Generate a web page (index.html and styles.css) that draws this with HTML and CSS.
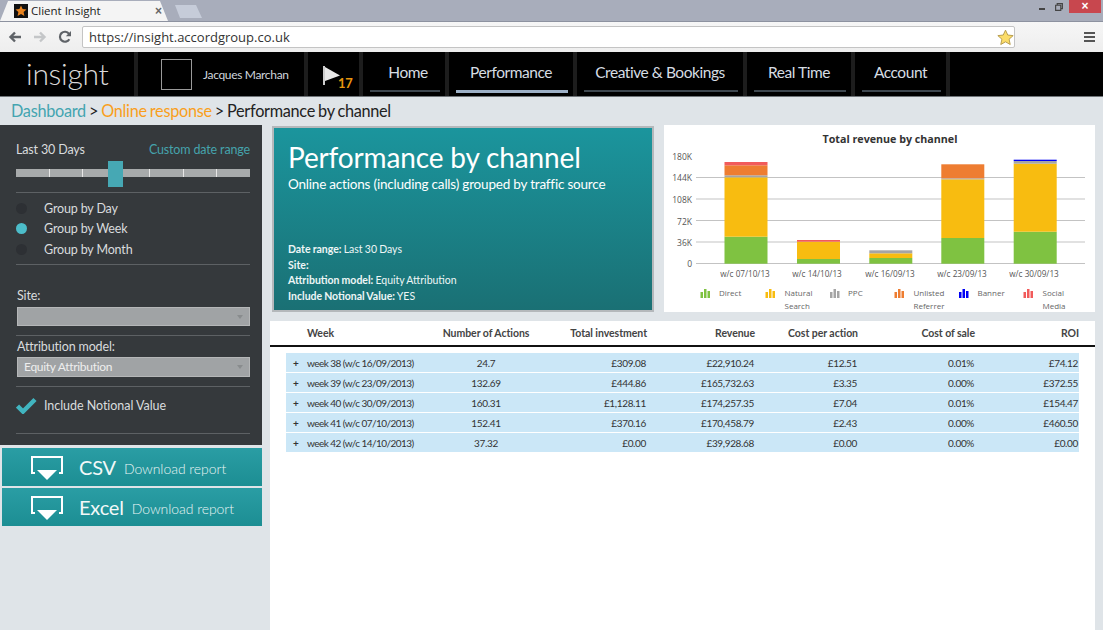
FILE: index.html
```html
<!DOCTYPE html>
<html lang="en">
<head>
<meta charset="utf-8">
<title>Client Insight</title>
<link rel="stylesheet" href="styles.css">
</head>
<body>
<div class="tabbar">
  <div class="tab">
    <svg class="favicon" viewBox="0 0 14 14"><rect width="14" height="14" fill="#111"/><path d="M7 1.5l1.6 3.6 3.9.4-2.9 2.6.8 3.9L7 10l-3.4 2 .8-3.9-2.9-2.6 3.9-.4z" fill="#e8831f"/></svg>
    <span class="tab-title">Client Insight</span>
    <span class="tab-close">×</span>
  </div>
  <div class="newtab"></div>
  <div class="winctrl">
    <span class="win-min"></span>
    <svg class="win-restore" viewBox="0 0 9 9"><path d="M2.5 2.5V.7h5.8v5.6H6.5M.7 2.5h5.8v5.8H.7z" fill="none" stroke="#444" stroke-width="1.3"/></svg>
    <span class="win-close">×</span>
  </div>
</div>
<div class="toolbar">
  <svg class="tool-icon" viewBox="0 0 14 14"><path d="M13 7H3M7 2.5L2.5 7 7 11.500" fill="none" stroke="#5f6368" stroke-width="2.400"/></svg>
  <svg class="tool-icon" viewBox="0 0 14 14"><path d="M1 7h10M7 2.500L11.500 7 7 11.500" fill="none" stroke="#c4c6c8" stroke-width="2.400"/></svg>
  <svg class="tool-icon" viewBox="0 0 14 14"><path d="M11.300 9.200A5 5 0 1 1 11 3.800" fill="none" stroke="#5f6368" stroke-width="2.200"/><path d="M13 1v5.200H7.800z" fill="#5f6368"/></svg>
  <div class="urlbar">
    <span class="url">https://insight.accordgroup.co.uk</span>
    <svg class="star" viewBox="0 0 18 18"><path d="M9 1.200l2.400 5.200 5.700.6-4.300 3.800 1.200 5.600L9 13.600l-5 2.800 1.200-5.600L.9 7l5.700-.6z" fill="#fbdc68" stroke="#b59a4a"/></svg>
  </div>
  <div class="menu-btn"><span></span><span></span><span></span></div>
</div>
<header class="topnav">
  <div class="logo">insight</div>
  <div class="user">
    <div class="avatar"></div>
    <span class="user-name">Jacques Marchan</span>
  </div>
  <div class="flag">
    <svg class="flag-icon" viewBox="0 0 18 19"><path d="M1 0v19" stroke="#ccc" stroke-width="2"/><path d="M2 1l15 8.500L2 15z" fill="#e8e8e8"/></svg>
    <span class="flag-count">17</span>
  </div>
  <nav class="nav">
    <a class="nav-item w-home">Home</a>
    <a class="nav-item w-perf active">Performance</a>
    <a class="nav-item w-creative">Creative &amp; Bookings</a>
    <a class="nav-item w-real">Real Time</a>
    <a class="nav-item w-account">Account</a>
  </nav>
</header>
<div class="crumbs"><span class="c-teal">Dashboard</span> &gt; <span class="c-orange">Online response</span> &gt; Performance by channel</div>
<div class="content">
  <div class="side">
    <aside class="filters">
      <div class="range-row"><span>Last 30 Days</span><span class="custom">Custom date range</span></div>
      <div class="slider">
        <div class="track"><i></i><i></i><i></i><i></i><i></i><i></i><i></i></div>
        <div class="handle"></div>
      </div>
      <div class="rule r-a"></div>
      <div class="radio"><span class="dot"></span>Group by Day</div>
      <div class="radio"><span class="dot on"></span>Group by Week</div>
      <div class="radio"><span class="dot"></span>Group by Month</div>
      <div class="rule r-b"></div>
      <div class="label">Site:</div>
      <div class="select s-site"><span class="arrow"></span></div>
      <div class="rule r-c"></div>
      <div class="label">Attribution model:</div>
      <div class="select s-attr">Equity Attribution<span class="arrow"></span></div>
      <div class="rule r-c"></div>
      <div class="check">
        <svg class="tick" viewBox="0 0 21 17"><path d="M1.500 9l5.500 5.500L19 2.500" fill="none" stroke="#41b5c0" stroke-width="4.500"/></svg>
        <span>Include Notional Value</span>
      </div>
      <div class="rule r-d"></div>
    </aside>
    <a class="dl">
      <svg class="dl-icon" viewBox="0 0 32 24"><path d="M4 17H1V1h30v16h-3" fill="none" stroke="#fff" stroke-width="2"/><path d="M6 14h20l-10 10z" fill="#fff"/></svg>
      <span class="dl-big">CSV</span><span class="dl-small">Download report</span>
    </a>
    <a class="dl">
      <svg class="dl-icon" viewBox="0 0 32 24"><path d="M4 17H1V1h30v16h-3" fill="none" stroke="#fff" stroke-width="2"/><path d="M6 14h20l-10 10z" fill="#fff"/></svg>
      <span class="dl-big">Excel</span><span class="dl-small">Download report</span>
    </a>
  </div>
  <main class="main">
    <div class="top-row">
      <section class="hero">
        <h1>Performance by channel</h1>
        <p class="hero-sub">Online actions (including calls) grouped by traffic source</p>
        <div class="meta">
          <div><b>Date range:</b> Last 30 Days</div>
          <div><b>Site:</b></div>
          <div><b>Attribution model:</b> Equity Attribution</div>
          <div><b>Include Notional Value:</b> YES</div>
        </div>
      </section>
      <section class="chart">
        <svg class="chart-svg" viewBox="664 125 431 187">
          <text class="ch-title" x="890" y="143" text-anchor="middle">Total revenue by channel</text>
          <g class="grid">
            <path d="M696 177.500H1085M696 199H1085M696 220.500H1085M696 242H1085M696 263.500H1085"/>
          </g>
          <g class="ylab" text-anchor="end">
            <text x="692" y="160">180K</text><text x="692" y="181">144K</text><text x="692" y="203">108K</text><text x="692" y="225">72K</text><text x="692" y="246">36K</text><text x="692" y="267">0</text>
          </g>
          <rect class="f-g" x="724.500" y="236.700" width="43" height="27"/>
          <rect class="f-y" x="724.500" y="177.300" width="43" height="59.400"/>
          <rect class="f-p" x="724.500" y="175.300" width="43" height="2"/>
          <rect class="f-o" x="724.500" y="165.300" width="43" height="10"/>
          <rect class="f-r" x="724.500" y="162" width="43" height="3.300"/>
          <rect class="f-g" x="797" y="259" width="43" height="4.700"/>
          <rect class="f-y" x="797" y="241.700" width="43" height="17.300"/>
          <rect class="f-r" x="797" y="240" width="43" height="1.700"/>
          <rect class="f-g" x="869.300" y="258" width="43" height="5.700"/>
          <rect class="f-y" x="869.300" y="253.300" width="43" height="4.700"/>
          <rect class="f-p" x="869.300" y="250.300" width="43" height="3"/>
          <rect class="f-g" x="941.300" y="238" width="43" height="25.700"/>
          <rect class="f-y" x="941.300" y="179.300" width="43" height="58.700"/>
          <rect class="f-p" x="941.300" y="178.300" width="43" height="1"/>
          <rect class="f-o" x="941.300" y="164.300" width="43" height="14"/>
          <rect class="f-g" x="1013.700" y="231.700" width="43" height="32"/>
          <rect class="f-y" x="1013.700" y="163.700" width="43" height="68"/>
          <rect class="f-p" x="1013.700" y="161" width="43" height="2.700"/>
          <rect class="f-b" x="1013.700" y="159.700" width="43" height="1.300"/>
          <g class="xlab" text-anchor="middle">
            <text x="745" y="277">w/c 07/10/13</text><text x="817" y="277">w/c 14/10/13</text><text x="890" y="277">w/c 16/09/13</text><text x="962" y="277">w/c 23/09/13</text><text x="1034" y="277">w/c 30/09/13</text>
          </g>
          <g class="f-g"><rect x="700.500" y="292" width="2.500" height="6"/><rect x="704" y="289" width="2.500" height="9"/><rect x="707.500" y="291" width="2.500" height="7"/></g>
          <g class="f-y"><rect x="765.500" y="292" width="2.500" height="6"/><rect x="769" y="289" width="2.500" height="9"/><rect x="772.500" y="291" width="2.500" height="7"/></g>
          <g class="f-p"><rect x="830" y="292" width="2.500" height="6"/><rect x="833.500" y="289" width="2.500" height="9"/><rect x="837" y="291" width="2.500" height="7"/></g>
          <g class="f-o"><rect x="894.500" y="292" width="2.500" height="6"/><rect x="898" y="289" width="2.500" height="9"/><rect x="901.500" y="291" width="2.500" height="7"/></g>
          <g class="f-b"><rect x="959" y="292" width="2.500" height="6"/><rect x="962.500" y="289" width="2.500" height="9"/><rect x="966" y="291" width="2.500" height="7"/></g>
          <g class="f-r"><rect x="1023.500" y="292" width="2.500" height="6"/><rect x="1027" y="289" width="2.500" height="9"/><rect x="1030.500" y="291" width="2.500" height="7"/></g>
          <g class="leg">
            <text x="719" y="296">Direct</text>
            <text x="784.500" y="296">Natural</text><text x="784.500" y="309">Search</text>
            <text x="848" y="296">PPC</text>
            <text x="913.500" y="296">Unlisted</text><text x="913.500" y="309">Referrer</text>
            <text x="977.500" y="296">Banner</text>
            <text x="1042.500" y="296">Social</text><text x="1042.500" y="309">Media</text>
          </g>
        </svg>
      </section>
    </div>
    <section class="report">
      <div class="thead">
        <span></span><span>Week</span><span class="ctr">Number of Actions</span><span class="rgt">Total investment</span><span class="rgt">Revenue</span><span class="rgt">Cost per action</span><span class="rgt">Cost of sale</span><span class="rgt">ROI</span>
      </div>
      <div class="tbody">
        <div class="row"><span class="plus">+</span><span class="wk">week 38 (w/c 16/09/2013)</span><span class="ctr">24.7</span><span class="rgt">£309.08</span><span class="rgt">£22,910.24</span><span class="rgt">£12.51</span><span class="rgt">0.01%</span><span class="rgt">£74.12</span></div>
        <div class="row"><span class="plus">+</span><span class="wk">week 39 (w/c 23/09/2013)</span><span class="ctr">132.69</span><span class="rgt">£444.86</span><span class="rgt">£165,732.63</span><span class="rgt">£3.35</span><span class="rgt">0.00%</span><span class="rgt">£372.55</span></div>
        <div class="row"><span class="plus">+</span><span class="wk">week 40 (w/c 30/09/2013)</span><span class="ctr">160.31</span><span class="rgt">£1,128.11</span><span class="rgt">£174,257.35</span><span class="rgt">£7.04</span><span class="rgt">0.01%</span><span class="rgt">£154.47</span></div>
        <div class="row"><span class="plus">+</span><span class="wk">week 41 (w/c 07/10/2013)</span><span class="ctr">152.41</span><span class="rgt">£370.16</span><span class="rgt">£170,458.79</span><span class="rgt">£2.43</span><span class="rgt">0.00%</span><span class="rgt">£460.50</span></div>
        <div class="row"><span class="plus">+</span><span class="wk">week 42 (w/c 14/10/2013)</span><span class="ctr">37.32</span><span class="rgt">£0.00</span><span class="rgt">£39,928.68</span><span class="rgt">£0.00</span><span class="rgt">0.00%</span><span class="rgt">£0.00</span></div>
      </div>
    </section>
  </main>
</div>
</body>
</html>
```

FILE: styles.css
```css
* { box-sizing: border-box; }
html, body { margin: 0; height: 630px; overflow: hidden; }
body { font-family: "Lato", "Liberation Sans", sans-serif; background: #dfe4e8; color: #222; width: 1103px; }

/* browser chrome */
.tabbar { height: 21px; background: #a8adbb; display: flex; position: relative; }
.tab { width: 168px; height: 21px; background: #f4f4f4; display: flex; align-items: center; padding: 0 0 0 14px;
  clip-path: polygon(0 100%, 8px 1px, 160px 1px, 168px 100%); }
.favicon { width: 14px; height: 14px; flex: none; }
.tab-title { font: 11.5px "Open Sans", sans-serif; color: #222; margin-left: 3px; flex: 1; }
.tab-close { font: bold 12px "Liberation Sans", sans-serif; color: #666; margin-right: 6px; }
.newtab { width: 27px; height: 13px; margin: 5px 0 0 7px; background: #c6ccd9; clip-path: polygon(0 0, 21px 0, 27px 100%, 5px 100%); }
.winctrl { margin-left: auto; display: flex; align-items: flex-start; padding-right: 2px; }
.win-min { width: 6px; height: 2px; background: #444; margin: 8px 0 0 0; }
.win-restore { width: 8px; height: 8px; margin: 3px 0 0 10px; }
.win-close { width: 32px; height: 13px; background: #c8474e; color: #fff; font: bold 12px/13px "Liberation Sans", sans-serif; text-align: center; margin-left: 6px; }

.toolbar { height: 31px; background: linear-gradient(#f6f6f6, #eeeeee); border-top: 1px solid #8d92a0; display: flex; align-items: center; padding: 0 8px 0 8px; }
.tool-icon { width: 14px; height: 14px; flex: none; margin-right: 11px; }
.urlbar { width: 933px; height: 22px; margin-left: -1px; background: #fff; border: 1px solid #c4c4c4; border-radius: 2px; display: flex; align-items: center; justify-content: space-between; padding: 0 0 0 6px; }
.url { font: 13px "Open Sans", sans-serif; color: #333; }
.star { width: 17px; height: 17px; }
.menu-btn { margin-left: auto; width: 11px; display: flex; flex-direction: column; gap: 2px; }
.menu-btn span { height: 2px; background: #555; }

/* header */
.topnav { height: 45px; background: #000; display: flex; border-bottom: 1px solid #6f7478; }
.logo { width: 138px; padding-left: 26px; font-weight: 300; font-size: 30px; letter-spacing: -0.3px; line-height: 42px; color: #d8d8d8; border-right: 4px solid #1d1d1d; }
.user { width: 170px; display: flex; align-items: center; padding-left: 23px; border-right: 4px solid #1d1d1d; }
.avatar { width: 31px; height: 31px; border: 1px solid #9a9a9a; flex: none; }
.user-name { font-size: 12px; letter-spacing: -0.33px; color: #cfd6dd; margin-left: 11px; white-space: nowrap; }
.flag { width: 55px; padding: 14px 0 0 15px; display: flex; align-items: flex-start; border-right: 4px solid #1d1d1d; }
.flag-icon { width: 18px; height: 19px; flex: none; }
.flag-count { font-size: 13px; font-weight: 700; letter-spacing: -0.3px; line-height: 14px; color: #e8960f; margin: 10px 0 0 -3px; }
.nav { display: flex; }
.nav-item { position: relative; display: block; font-size: 15.500px; letter-spacing: -0.45px; line-height: 40px; color: #d6dde3; text-align: center; border-right: 4px solid #1d1d1d; white-space: nowrap; }
.nav-item::after { content: ""; position: absolute; left: 7px; right: 5px; top: 38px; height: 2px; background: #3e474f; }
.nav-item.active::after { background: #9db0c6; height: 3px; }
.w-home { width: 86px; padding-left: 8px; }
.w-perf { width: 128px; }
.w-creative { width: 170px; }
.w-real { width: 108px; }
.w-account { width: 95px; }

.crumbs { height: 28px; font-size: 16.300px; letter-spacing: -0.3px; word-spacing: -0.8px; line-height: 27px; padding-left: 11px; color: #222; }
.c-teal { color: #44a4b0; }
.c-orange { color: #f99f1c; }

/* layout */
.content { display: flex; height: 505px; }
.side { width: 262px; flex: none; }
.filters { height: 320px; background: #35393c; color: #d9dcde; font-size: 12.500px; letter-spacing: -0.15px; padding: 17px 12px 0 16px; }
.range-row { display: flex; justify-content: space-between; line-height: 16px; }
.custom { color: #45a3ac; }
.slider { position: relative; height: 26px; margin-top: 3px; }
.track { position: absolute; left: 0; right: 0; top: 8px; height: 8px; background: #a7aaab; display: flex; }
.track i { flex: 1; border-right: 1px solid #e6e6e6; }
.track i:last-child { border-right: 0; }
.handle { position: absolute; left: 92px; top: 0; width: 15px; height: 26px; background: #46a8b4; }
.rule { height: 1px; background: #5d6164; }
.r-a { margin: 5px 0 5px; }
.r-b { margin: 4px 0 23px; }
.r-c { margin: 9px 0 3px; }
.r-d { margin-top: 19px; }
.radio { display: flex; align-items: center; height: 20.500px; }
.dot { width: 11px; height: 11px; border-radius: 50%; background: #2d3034; margin-right: 17px; flex: none; }
.dot.on { background: #4cbdca; }
.label { line-height: 16px; padding-left: 1px; }
.select { position: relative; background: #a0a3a5; color: #eee; padding-left: 6px; margin-left: 1px; font-size: 12px; letter-spacing: -0.3px; border: 1px solid #b5b7b8; }
.s-site { height: 19px; margin-top: 3px; }
.s-attr { height: 20px; margin-top: 2px; line-height: 18px; }
.arrow { position: absolute; right: 6px; top: 7px; width: 0; height: 0; border: 3.500px solid transparent; border-top: 4px solid #898c8e; border-bottom: 0; }
.check { display: flex; align-items: center; height: 16px; margin-top: 11px; letter-spacing: -0.05px; }
.tick { width: 21px; height: 17px; margin: 0 7px 0 0; flex: none; }
.dl { display: flex; align-items: center; height: 38px; margin: 3px 0 0 2px; padding-left: 29px; background: linear-gradient(#2a9da4, #1c8e93); color: #e8f4f4; }
.dl + .dl { margin-top: 2px; }
.dl-icon { width: 32px; height: 24px; flex: none; margin: 2px 16px 0 0; }
.dl-big { font-size: 20px; letter-spacing: -0.2px; line-height: 36px; color: #f2f8f8; margin-right: 8px; }
.dl-small { font-size: 14px; font-weight: 300; padding-top: 2px; letter-spacing: -0.05px; }

.main { width: 825px; margin-left: 8px; display: flex; flex-direction: column; }
.top-row { display: flex; height: 196px; }
.hero { width: 382px; height: 186px; margin: 1px 0 0 2px; padding: 12px 0 0 14px; border: 2px solid #b4b8bb; background: linear-gradient(#1b959d, #1a7074); color: #fff; display: flex; flex-direction: column; }
.hero h1 { margin: 0; font-size: 28px; letter-spacing: -0.15px; font-weight: 400; line-height: 34px; }
.hero-sub { margin: 1px 0 0; font-size: 13.500px; letter-spacing: -0.2px; line-height: 18px; }
.meta { margin-top: 49px; font-size: 10.500px; word-spacing: -0.5px; line-height: 15.500px; color: #eef6f6; }
.meta b { font-weight: 700; }
.chart { width: 431px; height: 187px; margin-left: 10px; background: #fff; }
.chart-svg { display: block; width: 431px; height: 187px; }
.ch-title { font: bold 10.700px "Open Sans", sans-serif; fill: #333; }
.grid path { stroke: #c3c3c3; stroke-width: 1.200; fill: none; }
.ylab text { font: 8.500px "Open Sans", sans-serif; fill: #555; }
.xlab text { font: 8.200px "Open Sans", sans-serif; fill: #555; }
.leg text { font: 8px "Open Sans", sans-serif; fill: #666; }
.f-g { fill: #7fc241; }
.f-y { fill: #f8bc10; }
.f-p { fill: #a5a5a5; }
.f-o { fill: #ee7d31; }
.f-b { fill: #0000f5; }
.f-r { fill: #f15b5b; }

.report { flex: 1; background: #fff; }
.thead, .row { display: grid; grid-template-columns: 21px 123px 112px 105px 108px 103px 117px 104px; align-items: center; }
.thead { height: 26px; padding: 0 16px; border-bottom: 2px solid #111; font-size: 10.500px; letter-spacing: -0.05px; font-weight: 700; color: #444; }
.thead .rgt { padding-right: 0; }
.tbody { padding: 6px 16px 0; }
.row { height: 19px; margin-bottom: 1px; background: #cbe7f7; font-size: 10px; letter-spacing: -0.35px; color: #333; }
.wk { letter-spacing: -0.55px; }
.plus { padding-left: 7px; font-weight: 700; }
.ctr { text-align: center; }
.rgt { text-align: right; padding-right: 1px; }
```
